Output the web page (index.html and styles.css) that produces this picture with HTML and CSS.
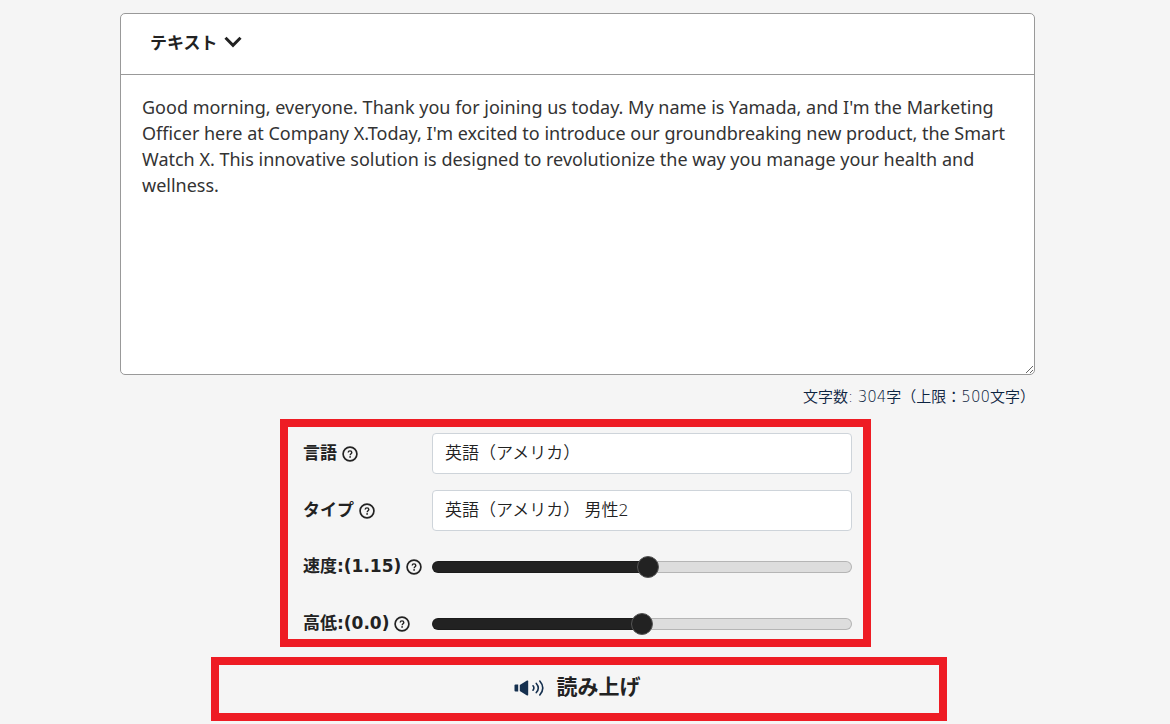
FILE: index.html
```html
<!DOCTYPE html>
<html lang="ja">
<head>
<meta charset="UTF-8" />
<meta name="viewport" content="width=device-width, initial-scale=1" />
<title>音声読み上げ</title>
<link rel="stylesheet" href="styles.css">
</head>
<body>

<svg width="0" height="0" class="sprite" aria-hidden="true">
  <symbol id="icon-help" viewBox="0 0 16 16">
    <circle cx="8" cy="8" r="6.9" fill="none" stroke="currentColor" stroke-width="1.7" />
    <path d="M6.2 6.6C6.2 5.5 6.9 4.9 8 4.9s1.8.6 1.8 1.6c0 1.3-1.6 1.3-1.6 2.7" fill="none" stroke="currentColor" stroke-width="1.4" />
    <circle cx="8.1" cy="10.9" r=".9" fill="currentColor" />
  </symbol>
</svg>

<main class="page">
  <section class="editor">
    <div class="editor-head">
      <button type="button" class="mode-btn">テキスト
        <svg class="chevron" viewBox="0 0 18 12" aria-hidden="true"><path d="M1.5 1.8L9 9.3l7.5-7.5" fill="none" stroke="currentColor" stroke-width="3" /></svg>
      </button>
    </div>
    <textarea class="editor-text" rows="10" aria-label="テキスト" spellcheck="false">Good morning, everyone. Thank you for joining us today. My name is Yamada, and I'm the Marketing Officer here at Company X.Today, I'm excited to introduce our groundbreaking new product, the Smart Watch X. This innovative solution is designed to revolutionize the way you manage your health and wellness.</textarea>
  </section>
  <p class="counter">文字数: 304字（上限：500文字）</p>

  <div class="settings-wrap">
    <form class="settings">
      <div class="row">
        <label for="lang">言語 <svg class="help"><use href="#icon-help" /></svg></label>
        <select id="lang">
          <option>英語（アメリカ）</option>
        </select>
      </div>
      <div class="row">
        <label for="voice">タイプ <svg class="help"><use href="#icon-help" /></svg></label>
        <select id="voice">
          <option>英語（アメリカ） 男性2</option>
        </select>
      </div>
      <div class="row slider-row">
        <label for="speed">速度:(1.15) <svg class="help"><use href="#icon-help" /></svg></label>
        <input type="range" id="speed" min="0.25" max="2" step="0.05" value="1.15" style="--fill: 51.4%">
      </div>
      <div class="row slider-row">
        <label for="pitch">高低:(0.0) <svg class="help"><use href="#icon-help" /></svg></label>
        <input type="range" id="pitch" min="-20" max="20" step="0.1" value="0" style="--fill: 50%">
      </div>
    </form>
  </div>

  <div class="speak-wrap">
    <button type="button" class="speak-btn">
      <svg class="speaker" viewBox="0 0 32 20" aria-hidden="true">
        <path d="M1.5 6.5H4.2v7H1.5Q.5 13.5 .5 12.5v-5Q.5 6.5 1.5 6.5z" fill="currentColor" />
        <path d="M5.8 7L13 2.6Q14.2 2 14.2 3.4v13.2q0 1.4-1.2.8L5.8 13z" fill="currentColor" />
        <path d="M19 7.8q1.8 2.2 0 4.4M22.3 5.4q4 4.6 0 9.2M25.8 3q6 7 0 14" fill="none" stroke="currentColor" stroke-width="1.6" stroke-linecap="round" />
      </svg>
      読み上げ
    </button>
  </div>
</main>

</body>
</html>
```
FILE: styles.css
```css
* {
  box-sizing: border-box;
}
body {
  margin: 0;
  padding: 13px 15px 0 0;
  background: #f5f5f5;
  color: #222;
  font-family: "Noto Sans", "Noto Sans CJK JP", sans-serif;
  font-size: 17px;
}
button, select, textarea {
  font: inherit;
  color: inherit;
}
.sprite {
  position: absolute;
}
.page {
  max-width: 915px;
  margin: 0 auto;
}

/* text editor */
.editor {
  background: #fff;
  border: 1px solid #999;
  border-radius: 5px;
}
.editor-head {
  display: flex;
  height: 61px;
  padding: 0 29px 5px;
  border-bottom: 1px solid #999;
}
.mode-btn {
  display: flex;
  align-items: center;
  gap: 6px;
  padding: 0;
  background: none;
  border: none;
  font-weight: bold;
  cursor: pointer;
}
.chevron {
  width: 18px;
  height: 12px;
}
.editor-text {
  display: block;
  width: 100%;
  padding: 19px 21px 20px;
  background: none;
  border: none;
  outline: none;
  color: #333;
  font-size: 18px;
  line-height: 26px;
  resize: vertical;
}
.counter {
  margin: 0;
  padding: 10px 0;
  color: #0c2340;
  font-family: "DejaVu Sans", "Noto Sans CJK JP", sans-serif;
  font-size: 15px;
  font-weight: 350;
  line-height: 24px;
  text-align: right;
}

/* voice settings */
.settings-wrap {
  padding-right: 4px;
}
.settings {
  display: flex;
  flex-direction: column;
  gap: 16px;
  max-width: 591px;
  margin: 0 auto;
  padding: 6px 11px 0 15px;
  border: 8px solid #ee1c24;
}
.row {
  display: flex;
  align-items: center;
}
.row label {
  display: flex;
  align-items: center;
  gap: 5px;
  flex: none;
  width: 129px;
  font-family: "DejaVu Sans", "Noto Sans CJK JP", sans-serif;
  font-weight: bold;
  line-height: 22px;
  padding-bottom: 2px;
}
.help {
  width: 16px;
  height: 16px;
  margin-top: 2px;
}
.row select {
  flex: 1;
  min-width: 0;
  height: 41px;
  padding: 0 12px 3px;
  appearance: none;
  background: #fff;
  border: 1px solid #ced4da;
  border-radius: 4px;
  font-weight: 350;
}
.slider-row {
  padding: 8px 0 9px;
}
.slider-row:last-child {
  padding-bottom: 3px;
}
input[type="range"] {
  flex: 1;
  min-width: 0;
  height: 12px;
  margin: 0;
  appearance: none;
  background: linear-gradient(to right, #222 var(--fill), #ddd var(--fill)) border-box;
  border: 1px solid rgba(0,0,0,0.18);
  border-radius: 6px;
}
input[type="range"]::-webkit-slider-thumb {
  appearance: none;
  width: 22px;
  height: 22px;
  background: #222;
  border: 1px solid #555;
  border-radius: 50%;
}

/* read aloud */
.speak-wrap {
  padding: 10px 0 3px 3px;
}
.speak-btn {
  display: flex;
  align-items: center;
  justify-content: center;
  gap: 11px;
  width: 100%;
  max-width: 736px;
  height: 64px;
  margin: 0 auto;
  padding: 0 4px 8px 0;
  background: none;
  border: 8px solid #ee1c24;
  font-size: 21px;
  font-weight: bold;
  cursor: pointer;
}
.speaker {
  width: 32px;
  height: 20px;
  margin-top: 6px;
  color: #15304f;
}
```
